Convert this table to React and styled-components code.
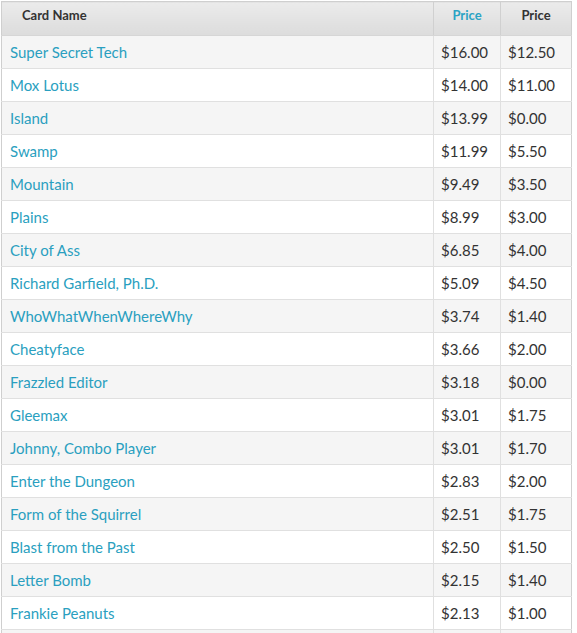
import React from "react";
import styled, { createGlobalStyle } from "styled-components";

const Global = createGlobalStyle`
  html, body { margin: 0; padding: 0; background: #fff; }
  body { font-family: Lato, "Open Sans", sans-serif; }
`;

const Wrap = styled.div`
  padding: 1px 0 0 1px;
`;

const Table = styled.table`
  width: 570px;
  table-layout: fixed;
  border-collapse: collapse;
  border: 1px solid #cfcfcf;
  font-family: Lato, sans-serif;
`;

const Col = styled.col`
  width: ${(p) => p.$w};
`;

const Th = styled.th`
  height: 34px;
  box-sizing: border-box;
  padding: 0 ${(p) => (p.$left ? "20px" : "4px")} 7px;
  text-align: ${(p) => (p.$left ? "left" : "center")};
  font-size: 13px;
  font-weight: 700;
  color: ${(p) => (p.$active ? "#2ba3c4" : "#333")};
  background: linear-gradient(#ebebeb, #dcdcdc);
  border-left: ${(p) => (p.$left ? "none" : "1px solid #d0d0d0")};
  border-bottom: 1px solid #d6d6d6;
`;

const Tr = styled.tr`
  background: ${(p) => (p.$odd ? "#f5f5f5" : "#ffffff")};
`;

const Td = styled.td`
  height: 32px;
  padding: 0 ${(p) => (p.$name ? "8px" : "7px")};
  font-size: 15px;
  color: ${(p) => (p.$name ? "#2a9fc0" : "#333")};
  border-top: 1px solid #e0e0e0;
  border-left: ${(p) => (p.$name ? "none" : "1px solid #e0e0e0")};
  white-space: nowrap;
  overflow: hidden;
`;

const rows = [
  ["Super Secret Tech", "$16.00", "$12.50"],
  ["Mox Lotus", "$14.00", "$11.00"],
  ["Island", "$13.99", "$0.00"],
  ["Swamp", "$11.99", "$5.50"],
  ["Mountain", "$9.49", "$3.50"],
  ["Plains", "$8.99", "$3.00"],
  ["City of Ass", "$6.85", "$4.00"],
  ["Richard Garfield, Ph.D.", "$5.09", "$4.50"],
  ["WhoWhatWhenWhereWhy", "$3.74", "$1.40"],
  ["Cheatyface", "$3.66", "$2.00"],
  ["Frazzled Editor", "$3.18", "$0.00"],
  ["Gleemax", "$3.01", "$1.75"],
  ["Johnny, Combo Player", "$3.01", "$1.70"],
  ["Enter the Dungeon", "$2.83", "$2.00"],
  ["Form of the Squirrel", "$2.51", "$1.75"],
  ["Blast from the Past", "$2.50", "$1.50"],
  ["Letter Bomb", "$2.15", "$1.40"],
  ["Frankie Peanuts", "$2.13", "$1.00"],
  ["", "", ""],
];

export default function App() {
  return (
    <>
      <Global />
      <Wrap>
        <Table>
          <colgroup>
            <Col $w="432px" />
            <Col $w="67px" />
            <Col $w="71px" />
          </colgroup>
          <thead>
            <tr>
              <Th $left>Card Name</Th>
              <Th $active>Price</Th>
              <Th>Price</Th>
            </tr>
          </thead>
          <tbody>
            {rows.map((r, i) => (
              <Tr key={i} $odd={i % 2 === 0}>
                <Td $name>{r[0]}</Td>
                <Td>{r[1]}</Td>
                <Td>{r[2]}</Td>
              </Tr>
            ))}
          </tbody>
        </Table>
      </Wrap>
    </>
  );
}
